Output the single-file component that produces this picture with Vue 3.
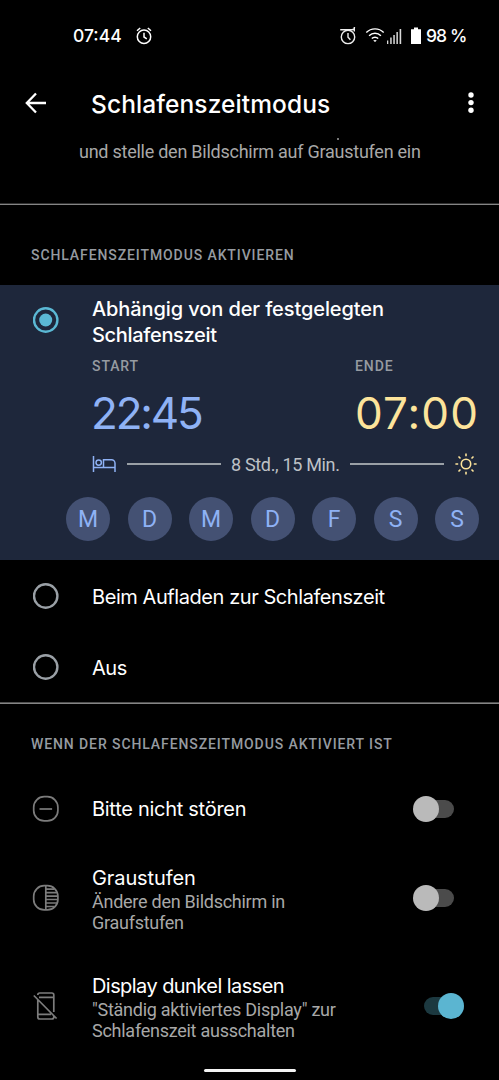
<script setup>
const days = ['M', 'D', 'M', 'D', 'F', 'S', 'S']
const toggles = [
  { icon: 'dnd', title: 'Bitte nicht stören', lines: [], on: false },
  { icon: 'gray', title: 'Graustufen', lines: ['Ändere den Bildschirm in', 'Graufstufen'], on: false },
  { icon: 'dark', title: 'Display dunkel lassen', lines: ['"Ständig aktiviertes Display" zur', 'Schlafenszeit ausschalten'], on: true },
]
</script>

<template>
  <div class="screen">
    <header class="status">
      <span class="clock">07:44</span>
      <svg class="alarm" width="18" height="18" viewBox="0 0 18 18" fill="none" stroke="#fff" stroke-width="1.5">
        <circle cx="9" cy="9.7" r="6.7" />
        <path d="M9 5.8v4.2l2.8 1.8M2 3.7L5.2 1M16 3.7L12.8 1" />
      </svg>
      <div class="sys">
        <svg class="alarm2" width="18" height="18" viewBox="0 0 18 18" fill="none" stroke="#eee" stroke-width="1.4">
          <circle cx="9" cy="9.9" r="6.7" />
          <path d="M9 6v4.2l2.4 2.6M1.2 2.8h11.600q3 0 2.600-2.800M15.300 0v4.600" />
        </svg>
        <svg class="wifi" width="20" height="18" viewBox="0 0 20 18" fill="none" stroke="#fff" stroke-width="1.4">
          <path d="M1.300 5.500a12.300 12.300 0 0 1 17.400 0M4.100 8.700a8.300 8.300 0 0 1 11.800 0M6.800 11.600a4.500 4.500 0 0 1 6.400 0" />
          <path d="M8.200 13.600q1.800-1 3.600 0l-1.800 1.400z" fill="#fff" stroke="none" />
        </svg>
        <svg class="signal" width="15" height="18" viewBox="0 0 15 18" fill="#d8d8d8">
          <path d="M0 13.500h1.300V17H0zM3.200 10.500h1.500V17H3.200zM6.300 8h1.500v9H6.300zM9.400 5h1.500v12H9.400zM12.600 2h1.600v15h-1.600z" />
        </svg>
        <svg class="battery" width="10" height="18" viewBox="0 0 10 18" fill="#fff">
          <path d="M3 .5h4v1.700h3V17H0V2.200h3z" />
        </svg>
        <span class="percent">98 %</span>
      </div>
    </header>

    <div class="appbar">
      <svg class="back" width="22" height="22" viewBox="0 0 22 22" fill="none" stroke="#fff" stroke-width="2.300">
        <path d="M11 1.500L1.800 11l9.200 9.500M1.800 11H21" />
      </svg>
      <h1>Schlafenszeitmodus</h1>
      <svg class="more" width="6" height="22" viewBox="0 0 6 22" fill="#fff">
        <circle cx="3" cy="3" r="2.700" /><circle cx="3" cy="10.600" r="2.700" /><circle cx="3" cy="18.200" r="2.700" />
      </svg>
    </div>

    <div class="intro"><i class="tick"></i>und stelle den Bildschirm auf Graustufen ein</div>

    <section class="activate">
      <h2>SCHLAFENSZEITMODUS AKTIVIEREN</h2>
      <div class="card">
        <div class="choice">
          <svg class="radio checked" width="26" height="26" viewBox="0 0 26 26">
            <circle cx="12.700" cy="13" r="11.700" fill="none" stroke="#5bb8d4" stroke-width="2.400" />
            <circle cx="12.700" cy="13" r="6.500" fill="#5bb8d4" />
          </svg>
          <div class="choice-title">Abhängig von der festgelegten<br /><span class="second">Schlafenszeit</span></div>
        </div>
        <div class="times">
          <div class="start">
            <div class="label">START</div>
            <div class="time">22:45</div>
          </div>
          <div class="end">
            <div class="label">ENDE</div>
            <div class="time">07:00</div>
          </div>
        </div>
        <div class="span">
          <svg width="24" height="18" viewBox="0 0 24 18" fill="none" stroke="#8fb2f5" stroke-width="1.500">
            <path d="M1.500 1v16M1.500 12.500h21.500M23 17V8.200a3.500 3.500 0 0 0-3.500-3.500h-8v7.800" />
            <circle cx="6.700" cy="7.600" r="2.700" />
          </svg>
          <i class="rule"></i>
          <span class="duration">8 Std., 15 Min.</span>
          <i class="rule"></i>
          <svg class="sun" width="22" height="22" viewBox="0 0 22 22" fill="none" stroke="#fde49b" stroke-width="1.600">
            <circle cx="11" cy="11" r="4.700" />
            <path d="M11 .400v2.800M11 18.800v2.800M.400 11h2.800M18.800 11h2.800M3.500 3.500l2 2M16.500 16.500l2 2M3.500 18.500l2-2M16.500 5.500l2-2" />
          </svg>
        </div>
        <div class="days">
          <span v-for="(d, i) in days" :key="i">{{ d }}</span>
        </div>
      </div>
      <div v-for="label in ['Beim Aufladen zur Schlafenszeit', 'Aus']" :key="label" class="option">
        <svg class="radio" width="26" height="26" viewBox="0 0 26 26">
          <circle cx="12.700" cy="13" r="11.700" fill="none" stroke="#9aa0a6" stroke-width="2.400" />
        </svg>
        <span>{{ label }}</span>
      </div>
    </section>

    <section class="effects">
      <h2>WENN DER SCHLAFENSZEITMODUS AKTIVIERT IST</h2>
      <div v-for="t in toggles" :key="t.icon" class="row" :class="t.icon">
        <svg class="icon" width="30" height="30" viewBox="0 0 30 30" fill="none" stroke="#7c7c7c" stroke-width="1.700">
          <template v-if="t.icon === 'dnd'">
            <rect x="2.700" y="2.700" width="24.200" height="24.200" rx="10.500" />
            <path d="M8.500 15h12.600" />
          </template>
          <template v-else-if="t.icon === 'gray'">
            <rect x="2.700" y="2.700" width="24.200" height="24.200" rx="10.500" />
            <path d="M14.800 3v24M15 6.200h8.500M15 9.600h11M15 13.100h12M15 16.500h12M15 20h11M15 23.500h8.500" />
          </template>
          <template v-else>
            <path d="M6.800 8.500v17.500a2 2 0 0 0 2 2h12a2 2 0 0 0 2-2v-1.500M6.800 4a2 2 0 0 1 2-2h12a2 2 0 0 1 2 2v17M8 6.300h14.500M7 23.400h13M2.800 4.500l22.800 23" />
          </template>
        </svg>
        <div class="copy">
          <div class="row-title">{{ t.title }}</div>
          <div v-for="l in t.lines" :key="l" class="sub">{{ l }}</div>
        </div>
        <span class="switch" :class="{ on: t.on }"></span>
      </div>
    </section>
    <div class="home"></div>
  </div>
</template>

<style>
body { margin: 0; background: #000; }
</style>

<style scoped>
* { box-sizing: border-box; }
.screen {
  width: 499px; height: 1080px; background: #000; color: #fff; overflow: hidden;
  display: flex; flex-direction: column; font-family: Roboto, "Noto Sans", sans-serif;
}
svg { display: block; flex: none; }
h1, h2 { margin: 0; font-weight: 500; white-space: nowrap; }
.status { height: 70px; padding: 2px 31px 0 73px; display: flex; align-items: center; font: 500 17.500px/20px Inter, sans-serif; }
.clock { width: 62px; letter-spacing: 0; }
.sys { margin-left: auto; display: flex; align-items: center; }
.wifi { margin-left: 8px; }
.signal { margin-left: 2px; }
.battery { margin-left: 9px; }
.percent { margin-left: 5px; letter-spacing: -0.900px; white-space: nowrap; width: 42px; }
.appbar { height: 66px; padding: 0 25px; display: flex; align-items: center; }
.appbar h1 { margin-left: 44px; padding-top: 1px; font: 500 24.500px/32px Inter, sans-serif; letter-spacing: 0.100px; }
.more { margin-left: auto; }
.intro { height: 68px; position: relative; padding-left: 79px; font-size: 18px; line-height: 31px; letter-spacing: -0.250px; color: #a8a8a8; white-space: nowrap; }
.tick { position: absolute; left: 337px; top: 2px; width: 2px; height: 2px; background: #777; }
.activate { border-top: 1px solid #858585; box-shadow: 0 -1px #303030; height: 499px; }
h2 { font-size: 14px; line-height: 20px; color: #969ba1; letter-spacing: 0.900px; padding-left: 31px; }
.activate h2 { height: 80px; padding-top: 40px; }
.card { height: 275px; background: #1e273b; padding-top: 11px; }
.choice { display: flex; padding-left: 33px; }
.radio { margin-right: 33px; }
.radio.checked { margin-top: 11px; }
.choice-title { font: 500 20px/25.500px Inter, sans-serif; letter-spacing: -0.100px; white-space: nowrap; padding-top: 1px; margin-bottom: -1px; }
.second { letter-spacing: -0.330px; }
.times { display: flex; padding: 9px 0 0 92px; height: 106px; }
.start { width: 263px; }
.label { font-size: 14px; font-weight: 500; line-height: 20px; letter-spacing: 0.900px; color: #969ba1; }
.time { font: 400 44px/54px Inter, sans-serif; margin-top: 10px; white-space: nowrap; }
.start .time { color: #8fb2f5; letter-spacing: -2.200px; margin-left: -1px; }
.end .time { color: #fde49b; letter-spacing: 1.100px; }
.span { display: flex; align-items: center; padding: 0 22px 0 92px; height: 22px; }
.rule { height: 2px; width: 94px; background: #9aa0a6; flex: none; }
.span svg + .rule { margin-left: 11px; }
.duration { width: 108px; margin: 0 11px 0 10px; font-size: 18px; letter-spacing: -0.330px; color: #bdc1c6; white-space: nowrap; }
.sun { margin-left: auto; }
.days { display: flex; justify-content: space-between; padding: 0 20px 0 66px; margin-top: 22px; }
.days span { width: 44px; height: 44px; border-radius: 50%; background: #445173; color: #8fb2f5; font-size: 23px; line-height: 45px; text-align: center; }
.option { height: 71px; display: flex; align-items: center; padding-left: 33px; font: 400 20px/26px Inter, sans-serif; letter-spacing: -0.430px; white-space: nowrap; }
.option span { padding-top: 2px; }
.effects { border-top: 1px solid #858585; box-shadow: 0 -1px #505050; height: 366px; }
.effects h2 { height: 69px; padding-top: 30px; }
.row { display: flex; align-items: center; padding: 0 35px 0 31px; }
.dnd { height: 71px; }
.gray { height: 108px; }
.dark { height: 108px; }
.copy { margin-left: 31px; white-space: nowrap; padding-top: 1px; }
.row-title { font: 400 20px/26px Inter, sans-serif; letter-spacing: -0.280px; }
.gray .row-title { letter-spacing: -0.100px; }
.dark .row-title { letter-spacing: -0.570px; }
.sub { font-size: 18px; line-height: 21px; letter-spacing: -0.260px; color: #a8a8a8; }
.switch { margin-left: auto; margin-right: 10px; position: relative; width: 31px; height: 18px; border-radius: 9px; background: #4b4b4b; }
.switch::after { content: ""; position: absolute; left: -10px; top: -4px; width: 26px; height: 26px; border-radius: 50%; background: #bababa; }
.switch.on { margin-right: 0; width: 40px; background: #1c3940; }
.switch.on::after { left: 14px; background: #5bb5d1; }
.home { width: 92px; height: 3px; border-radius: 2px; background: #f4f4f4; align-self: center; }
</style>
